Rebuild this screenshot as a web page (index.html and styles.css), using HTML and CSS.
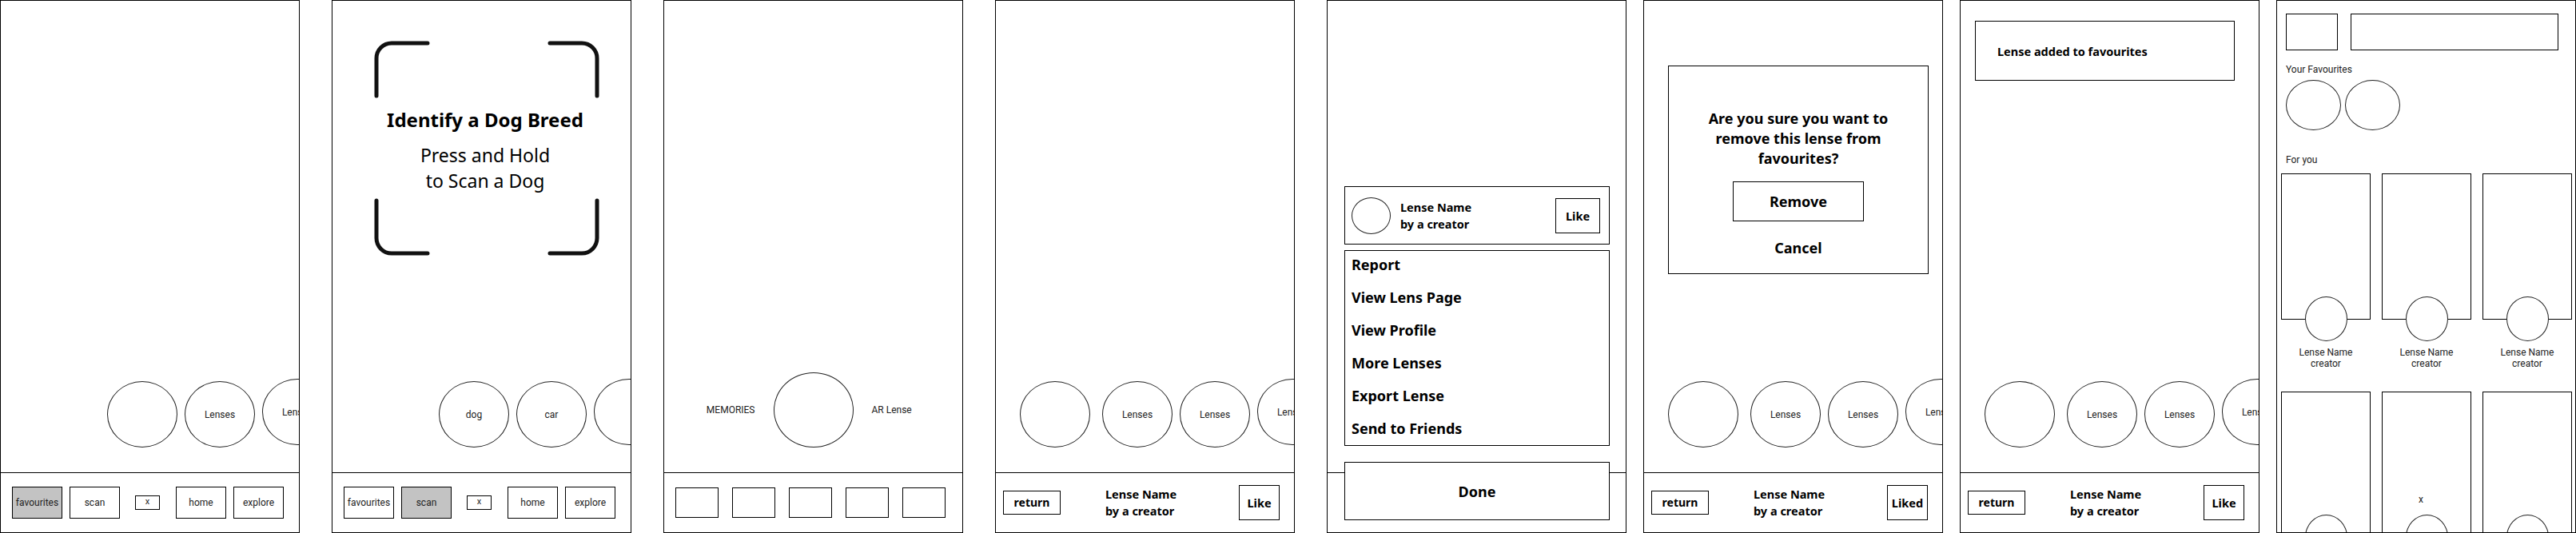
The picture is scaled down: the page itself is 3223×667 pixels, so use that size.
FILE: index.html
```html
<!DOCTYPE html>
<html lang="en">

<head>
  <meta charset="UTF-8">
  <title>Lens Explorer Wireframes</title>
  <link rel="stylesheet" href="styles.css">
</head>

<body>
  <main class="board">

    <!-- 1: camera, favourites tab -->
    <section class="screen">
      <div class="view">
        <div class="lens-row">
          <div class="lens"></div>
          <div class="lens">Lenses</div>
          <div class="lens peek">Lenses</div>
        </div>
      </div>
      <nav class="tabbar">
        <span class="tab on">favourites</span>
        <span class="tab">scan</span>
        <span class="tab-x">x</span>
        <span class="tab">home</span>
        <span class="tab">explore</span>
      </nav>
    </section>

    <!-- 2: scan -->
    <section class="screen">
      <div class="view">
        <div class="scan">
          <svg class="brackets" width="290" height="275" viewBox="0 0 290 275">
            <path d="M5 71 V24 A19 19 0 0 1 24 5 H69" />
            <path d="M222 5 H262 A19 19 0 0 1 281 24 V71" />
            <path d="M5 202 V249 A19 19 0 0 0 24 268 H69" />
            <path d="M222 268 H262 A19 19 0 0 0 281 249 V202" />
          </svg>
          <h1>Identify a Dog Breed</h1>
          <p>Press and Hold<br>to Scan a Dog</p>
        </div>
        <div class="lens-row">
          <div class="lens">dog</div>
          <div class="lens">car</div>
          <div class="lens peek"></div>
        </div>
      </div>
      <nav class="tabbar">
        <span class="tab">favourites</span>
        <span class="tab on">scan</span>
        <span class="tab-x">x</span>
        <span class="tab">home</span>
        <span class="tab">explore</span>
      </nav>
    </section>

    <!-- 3: capture -->
    <section class="screen">
      <div class="view">
        <div class="capture">
          <span class="side left">MEMORIES</span>
          <div class="shutter"></div>
          <span class="side">AR Lense</span>
        </div>
      </div>
      <nav class="slots">
        <span class="slot"></span>
        <span class="slot"></span>
        <span class="slot"></span>
        <span class="slot"></span>
        <span class="slot"></span>
      </nav>
    </section>

    <!-- 4: lens open -->
    <section class="screen">
      <div class="view">
        <div class="lens-row full">
          <div class="lens lead"></div>
          <div class="lens">Lenses</div>
          <div class="lens">Lenses</div>
          <div class="lens peek">Lenses</div>
        </div>
      </div>
      <nav class="infobar">
        <span class="btn-return">return</span>
        <div class="lens-title">Lense Name<br>by a creator</div>
        <span class="btn-like">Like</span>
      </nav>
    </section>

    <!-- 5: lens options sheet -->
    <section class="screen">
      <div class="view"></div>
      <nav class="tabbar"></nav>
      <div class="sheet">
        <div class="lens-card">
          <div class="avatar"></div>
          <div class="lens-title">Lense Name<br>by a creator</div>
          <span class="btn-like big">Like</span>
        </div>
        <ul class="menu">
          <li>Report</li>
          <li>View Lens Page</li>
          <li>View Profile</li>
          <li>More Lenses</li>
          <li>Export Lense</li>
          <li>Send to Friends</li>
        </ul>
        <div class="done">Done</div>
      </div>
    </section>

    <!-- 6: remove from favourites -->
    <section class="screen close">
      <div class="view">
        <div class="confirm">
          <p>Are you sure you want to<br>remove this lense from<br>favourites?</p>
          <span class="btn-remove">Remove</span>
          <span class="btn-cancel">Cancel</span>
        </div>
        <div class="lens-row full">
          <div class="lens lead"></div>
          <div class="lens">Lenses</div>
          <div class="lens">Lenses</div>
          <div class="lens peek">Lenses</div>
        </div>
      </div>
      <nav class="infobar">
        <span class="btn-return">return</span>
        <div class="lens-title">Lense Name<br>by a creator</div>
        <span class="btn-like">Liked</span>
      </nav>
    </section>

    <!-- 7: added toast -->
    <section class="screen close">
      <div class="view">
        <div class="toast">Lense added to favourites</div>
        <div class="lens-row full">
          <div class="lens lead"></div>
          <div class="lens">Lenses</div>
          <div class="lens">Lenses</div>
          <div class="lens peek">Lenses</div>
        </div>
      </div>
      <nav class="infobar">
        <span class="btn-return">return</span>
        <div class="lens-title">Lense Name<br>by a creator</div>
        <span class="btn-like">Like</span>
      </nav>
    </section>

    <!-- 8: explore -->
    <section class="screen close">
      <div class="feed">
        <div class="search-row">
          <div class="box small"></div>
          <div class="box wide"></div>
        </div>
        <h3>Your Favourites</h3>
        <div class="favs">
          <div class="fav"></div>
          <div class="fav"></div>
        </div>
        <h3 class="for-you">For you</h3>
        <div class="tiles">
          <div class="tile">
            <div class="thumb"></div>
            <div class="avatar"></div>
            <div class="tile-name">Lense Name<br>creator</div>
          </div>
          <div class="tile">
            <div class="thumb"></div>
            <div class="avatar"></div>
            <div class="tile-name">Lense Name<br>creator</div>
          </div>
          <div class="tile">
            <div class="thumb"></div>
            <div class="avatar"></div>
            <div class="tile-name">Lense Name<br>creator</div>
          </div>
          <div class="tile">
            <div class="thumb"></div>
            <div class="avatar"></div>
          </div>
          <div class="tile">
            <div class="thumb"><span>x</span></div>
            <div class="avatar"></div>
          </div>
          <div class="tile">
            <div class="thumb"></div>
            <div class="avatar"></div>
          </div>
        </div>
      </div>
    </section>

  </main>
</body>

</html>
```

FILE: styles.css
```css
body {
  margin: 0;
  background: #fff;
  color: #000;
  font-family: 'Noto Sans', 'Open Sans', sans-serif;
}

.board {
  display: flex;
  align-items: flex-start;
  height: 667px;
  overflow: hidden;
}

.screen {
  position: relative;
  flex: none;
  display: flex;
  flex-direction: column;
  width: 375px;
  height: 667px;
  box-sizing: border-box;
  border: 1px solid #000;
  background: #fff;
  overflow: hidden;
}

.screen + .screen {
  margin-left: 40px;
}

.screen.close {
  margin-left: 21px;
}

.view {
  flex: 1;
  min-height: 0;
  display: flex;
  flex-direction: column;
}

/* bottom bars */
.tabbar,
.infobar,
.slots {
  flex: none;
  display: flex;
  align-items: center;
  height: 75px;
  box-sizing: border-box;
  border-top: 1px solid #000;
}

.tabbar {
  padding-left: 14px;
  gap: 9px;
}

.tab {
  width: 63px;
  height: 40px;
  box-sizing: border-box;
  border: 1px solid #000;
  display: flex;
  align-items: center;
  justify-content: center;
  font: 12px Roboto, sans-serif;
  color: #222;
}

.tab.on {
  background: #c3c3c3;
}

.tab-x {
  width: 31px;
  height: 18px;
  margin: 0 11px 0 10px;
  box-sizing: border-box;
  border: 1px solid #000;
  display: flex;
  align-items: center;
  justify-content: center;
  font: 11px/1 Roboto, sans-serif;
  color: #222;
  padding-bottom: 3px;
}

.slots {
  padding-left: 14px;
  gap: 17px;
}

.slot {
  width: 54px;
  height: 38px;
  box-sizing: border-box;
  border: 1px solid #000;
}

.infobar {
  padding: 0 18px 0 9px;
}

.btn-return {
  width: 72px;
  height: 30px;
  box-sizing: border-box;
  border: 1px solid #000;
  display: flex;
  align-items: center;
  justify-content: center;
  font-weight: 700;
  font-size: 14px;
  padding-bottom: 2px;
}

.lens-title {
  margin-left: 56px;
  font-weight: 700;
  font-size: 14.5px;
  line-height: 21px;
}

.btn-like {
  margin-left: auto;
  width: 51px;
  height: 44px;
  box-sizing: border-box;
  border: 1px solid #000;
  display: flex;
  align-items: center;
  justify-content: center;
  font-weight: 700;
  font-size: 14.5px;
}

/* lens carousel */
.lens-row {
  margin-top: auto;
  display: flex;
  align-items: flex-end;
  gap: 9px;
  padding: 0 0 31px 133px;
}

.lens-row.full {
  padding-left: 30px;
}

.lens {
  flex: none;
  width: 88px;
  height: 83px;
  box-sizing: border-box;
  border: 1px solid #222;
  border-radius: 50%;
  background: #fff;
  display: flex;
  align-items: center;
  justify-content: center;
  font: 12px Roboto, sans-serif;
  color: #222;
}

.lens.lead {
  margin-right: 6px;
}

.lens.peek {
  margin-bottom: 3px;
}

/* scan screen */
.scan {
  position: relative;
  width: 290px;
  height: 275px;
  margin: 48px 0 0 50px;
  box-sizing: border-box;
  padding: 86px 8px 0 0;
  text-align: center;
}

.brackets {
  position: absolute;
  top: 0;
  left: 0;
  fill: none;
  stroke: #111;
  stroke-width: 5;
  stroke-linecap: round;
}

.scan h1 {
  margin: 0 0 13px;
  font-size: 24px;
  line-height: 30px;
  font-weight: 700;
}

.scan p {
  margin: 0;
  font-size: 23px;
  line-height: 32px;
}

/* capture screen */
.capture {
  margin-top: auto;
  display: grid;
  grid-template-columns: 1fr 100px 1fr;
  align-items: center;
  column-gap: 23px;
  padding-bottom: 31px;
}

.side {
  font: 12px Roboto, sans-serif;
  color: #222;
}

.side.left {
  justify-self: end;
}

.shutter {
  height: 94px;
  box-sizing: border-box;
  border: 1px solid #222;
  border-radius: 50%;
}

/* options sheet */
.sheet {
  position: absolute;
  left: 21px;
  top: 232px;
  width: 332px;
  display: flex;
  flex-direction: column;
}

.lens-card {
  height: 73px;
  box-sizing: border-box;
  border: 1px solid #000;
  background: #fff;
  display: flex;
  align-items: center;
  padding: 0 11px 0 8px;
}

.lens-card .avatar {
  width: 49px;
  height: 46px;
}

.lens-card .lens-title {
  margin-left: 12px;
}

.btn-like.big {
  width: 56px;
}

.menu {
  margin: 7px 0 0;
  height: 245px;
  box-sizing: border-box;
  border: 1px solid #000;
  padding: 0 8px;
  list-style: none;
  background: #fff;
  overflow: hidden;
}

.menu li {
  font-weight: 700;
  font-size: 18px;
  line-height: 41px;
}

.menu li:first-child {
  margin-top: -3px;
}

.done {
  margin-top: 20px;
  height: 73px;
  box-sizing: border-box;
  border: 1px solid #000;
  background: #fff;
  display: flex;
  align-items: center;
  justify-content: center;
  font-weight: 700;
  font-size: 18px;
}

.avatar {
  flex: none;
  box-sizing: border-box;
  border: 1px solid #222;
  border-radius: 50%;
  background: #fff;
}

/* confirm dialog */
.confirm {
  margin: 81px 0 0 30px;
  width: 326px;
  height: 261px;
  box-sizing: border-box;
  border: 1px solid #000;
  padding-top: 53px;
  display: flex;
  flex-direction: column;
  align-items: center;
  text-align: center;
}

.confirm p {
  margin: 0;
  font-weight: 700;
  font-size: 18px;
  line-height: 25px;
}

.btn-remove {
  margin-top: 16px;
  width: 164px;
  height: 50px;
  box-sizing: border-box;
  border: 1px solid #000;
  display: flex;
  align-items: center;
  justify-content: center;
  font-weight: 700;
  font-size: 18px;
}

.btn-cancel {
  margin-top: 21px;
  font-weight: 700;
  font-size: 18px;
}

/* toast */
.toast {
  margin: 25px 0 0 18px;
  width: 325px;
  height: 75px;
  box-sizing: border-box;
  border: 1px solid #000;
  padding-left: 27px;
  display: flex;
  align-items: center;
  font-weight: 700;
  font-size: 14.5px;
}

/* explore */
.feed {
  flex: none;
  padding: 16px 0 0 5px;
  font-family: Roboto, sans-serif;
  color: #222;
}

.search-row {
  display: flex;
  gap: 16px;
  margin-left: 6px;
}

.box {
  height: 46px;
  box-sizing: border-box;
  border: 1px solid #000;
}

.box.small {
  width: 65px;
}

.box.wide {
  width: 260px;
}

.feed h3 {
  margin: 17px 0 6px 6px;
  font-size: 12px;
  line-height: 14px;
  font-weight: 400;
}

.feed h3.for-you {
  margin: 30px 0 10px 6px;
}

.favs {
  display: flex;
  gap: 5px;
  margin-left: 6px;
}

.fav {
  width: 69px;
  height: 63px;
  box-sizing: border-box;
  border: 1px solid #222;
  border-radius: 50%;
}

.tiles {
  display: grid;
  grid-template-columns: repeat(3, 112px);
  column-gap: 14px;
  row-gap: 28px;
}

.tile {
  display: flex;
  flex-direction: column;
  align-items: center;
}

.thumb {
  width: 112px;
  height: 183px;
  box-sizing: border-box;
  border: 1px solid #000;
  display: flex;
  flex-direction: column;
  justify-content: flex-end;
  align-items: center;
  padding: 0 14px 40px 0;
  font-size: 12px;
  line-height: 14px;
}

.tile .avatar {
  width: 53px;
  height: 56px;
  margin-top: -29px;
}

.tile-name {
  margin-top: 7px;
  font-size: 12px;
  line-height: 14px;
  text-align: center;
}
```
